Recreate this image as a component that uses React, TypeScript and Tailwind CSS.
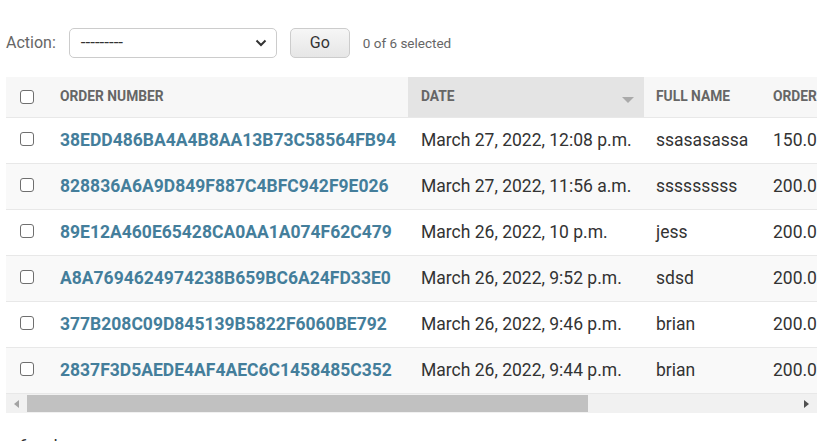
const rows = [
  { id: "38EDD486BA4A4B8AA13B73C58564FB94", date: "March 27, 2022, 12:08 p.m.", name: "ssasasassa", total: "150.00" },
  { id: "828836A6A9D849F887C4BFC942F9E026", date: "March 27, 2022, 11:56 a.m.", name: "sssssssss", total: "200.00" },
  { id: "89E12A460E65428CA0AA1A074F62C479", date: "March 26, 2022, 10 p.m.", name: "jess", total: "200.00" },
  { id: "A8A7694624974238B659BC6A24FD33E0", date: "March 26, 2022, 9:52 p.m.", name: "sdsd", total: "200.00" },
  { id: "377B208C09D845139B5822F6060BE792", date: "March 26, 2022, 9:46 p.m.", name: "brian", total: "200.00" },
  { id: "2837F3D5AEDE4AF4AEC6C1458485C352", date: "March 26, 2022, 9:44 p.m.", name: "brian", total: "200.00" },
]

function Box() {
  return <span className="block w-[14px] h-[14px] rounded-[3px] border border-[#6f6f6f] bg-white" />
}

export default function App() {
  return (
    <div className="min-h-[441px] bg-white text-[#333] font-['Roboto','Liberation_Sans',sans-serif] px-[6px] pt-[28px]">
      <div className="flex items-center h-[30px] text-[16px]">
        <span className="text-[#666] mr-[13px]">Action:</span>
        <div className="flex items-center justify-between w-[208px] h-[30px] border border-[#ccc] rounded-[5px] bg-white pl-[11px] pr-[9px]">
          <span className="text-[17px] text-[#333]">---------</span>
          <svg width="12" height="8" viewBox="0 0 12 8"><path d="M1.5 1.5 6 6l4.5-4.5" fill="none" stroke="#333" strokeWidth="2" /></svg>
        </div>
        <button className="ml-[13px] w-[60px] h-[30px] border border-[#ccc] rounded-[5px] bg-[linear-gradient(#f6f6f6,#e6e6e6)] text-[16px] text-[#333]">Go</button>
        <span className="ml-[13px] text-[13.5px] text-[#666]">0 of 6 selected</span>
      </div>

      <div className="mt-[19px] w-[811px] overflow-hidden">
        <table className="table-fixed border-collapse w-[1100px]">
          <colgroup>
            <col className="w-[42px]" />
            <col className="w-[360px]" />
            <col className="w-[236px]" />
            <col className="w-[117px]" />
            <col className="w-[345px]" />
          </colgroup>
          <thead>
            <tr className="h-[40px] bg-[#f7f7f7] text-left text-[13.8px] font-bold uppercase text-[#666]">
              <th className="pl-[14px]"><Box /></th>
              <th className="pl-[12px]">Order number</th>
              <th className="pl-[13px] bg-[#e4e4e4]">
                <div className="flex items-center justify-between pr-[10px]">
                  <span>Date</span>
                  <svg width="12" height="6" viewBox="0 0 12 6" className="mt-[6px]"><path d="M0 0h12L6 6z" fill="#aaa" /></svg>
                </div>
              </th>
              <th className="pl-[12px]">Full name</th>
              <th className="pl-[12px]">Order total</th>
            </tr>
          </thead>
          <tbody>
            {rows.map((r, i) => (
              <tr key={r.id} className={`h-[46px] border-t border-[#e8e8e8] text-[17.5px] ${i % 2 ? "bg-[#f9f9f9]" : "bg-white"}`}>
                <td className="pl-[14px] align-top pt-[14px]"><Box /></td>
                <td className="pl-[12px] font-bold text-[#447e9b]">{r.id}</td>
                <td className="pl-[13px]">{r.date}</td>
                <td className="pl-[12px]">{r.name}</td>
                <td className="pl-[12px]">{r.total}</td>
              </tr>
            ))}
          </tbody>
        </table>
        <div className="flex items-center h-[20px] bg-[#f1f1f1] border-t border-[#e8e8e8]">
          <span className="w-[21px] flex justify-center">
            <svg width="5" height="8" viewBox="0 0 5 8"><path d="M5 0v8L0 4z" fill="#a3a3a3" /></svg>
          </span>
          <span className="h-[17px] w-[561px] bg-[#c1c1c1]" />
          <span className="flex-1" />
          <span className="w-[21px] flex justify-center">
            <svg width="5" height="8" viewBox="0 0 5 8"><path d="M0 0v8l5-4z" fill="#505050" /></svg>
          </span>
        </div>
      </div>

      <p className="mt-[20px] pl-[13px] text-[17px] text-[#333]">6 orders</p>
    </div>
  )
}
